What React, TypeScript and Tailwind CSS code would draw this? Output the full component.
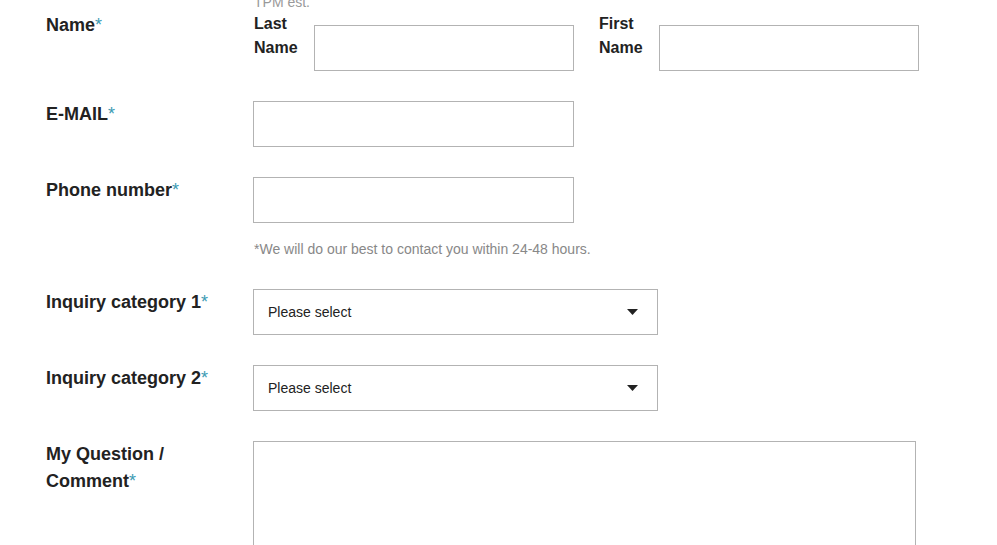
import React from 'react'

const Req = () => <span className="text-[#3d9bb3] font-normal">*</span>

function Label({ children }: { children: React.ReactNode }) {
  return (
    <div className="w-[207px] shrink-0 pr-[20px] text-[18px] leading-[27px] font-bold text-[#222]">
      {children}
    </div>
  )
}

function Select() {
  return (
    <div className="w-[405px] h-[46px] border border-[#b3b3b3] flex items-center justify-between pl-[14px] pr-[19px] text-[14px] text-[#222]">
      <span>Please select</span>
      <svg width="11" height="6" viewBox="0 0 11 6">
        <path d="M0 0h11L5.5 6z" fill="#222" />
      </svg>
    </div>
  )
}

export default function App() {
  return (
    <div className="min-h-screen bg-white overflow-hidden" style={{ fontFamily: '"Liberation Sans", Arial, sans-serif' }}>
      <div className="pl-[46px]">
        <div className="pl-[208px] -mt-[8px] text-[14px] leading-[20px] text-[#999]">TPM est.</div>

        <div className="flex flex-col gap-[30px]">
          <div className="flex">
            <Label>
              Name<Req />
            </Label>
            <div className="flex">
              <div className="w-[61px] pl-px text-[16px] leading-[24px] font-bold text-[#222]">
                Last Name
              </div>
              <input className="w-[260px] h-[46px] mt-[13px] border border-[#b3b3b3] outline-none" />
              <div className="w-[60px] ml-[25px] text-[16px] leading-[24px] font-bold text-[#222]">
                First Name
              </div>
              <input className="w-[260px] h-[46px] mt-[13px] border border-[#b3b3b3] outline-none" />
            </div>
          </div>

          <div className="flex">
            <Label>
              E-MAIL<Req />
            </Label>
            <input className="w-[321px] h-[46px] border border-[#b3b3b3] outline-none" />
          </div>

          <div className="flex">
            <Label>
              Phone number<Req />
            </Label>
            <div>
              <input className="w-[321px] h-[46px] border border-[#b3b3b3] outline-none" />
              <p className="mt-[16px] pl-px text-[14px] leading-[20px] text-[#888]">
                *We will do our best to contact you within 24-48 hours.
              </p>
            </div>
          </div>

          <div className="flex">
            <Label>
              Inquiry category 1<Req />
            </Label>
            <Select />
          </div>

          <div className="flex">
            <Label>
              Inquiry category 2<Req />
            </Label>
            <Select />
          </div>

          <div className="flex">
            <Label>
              My Question / Comment<Req />
            </Label>
            <textarea className="w-[663px] h-[160px] border border-[#b3b3b3] outline-none resize-none" />
          </div>
        </div>
      </div>
    </div>
  )
}
